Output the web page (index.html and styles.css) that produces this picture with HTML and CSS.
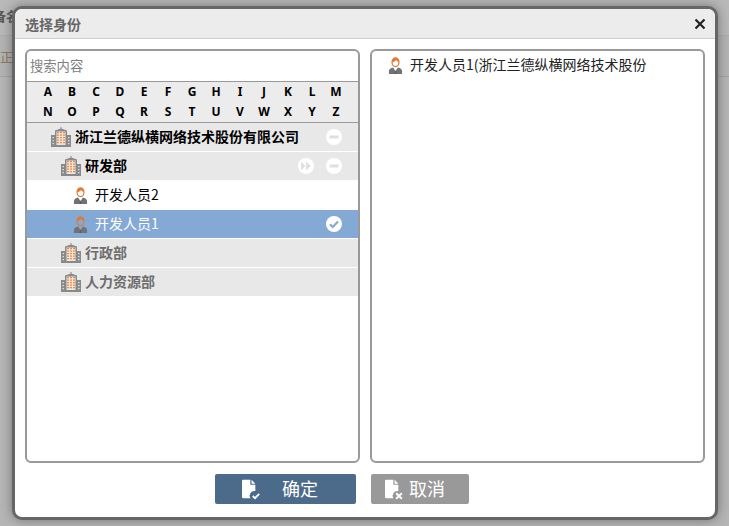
FILE: index.html
```html
<!DOCTYPE html>
<html lang="zh">
<head>
<meta charset="utf-8">
<title>选择身份</title>
<link rel="stylesheet" href="styles.css">
</head>
<body>
<svg class="defs" width="0" height="0" aria-hidden="true">
  <symbol id="building" viewBox="0 0 20 20">
    <path fill="#868a8a" d="M0 18.500h20V20H0zM0 8h4v11H0zM16 8h4v11h-4zM9.500 0h1v2h-1zM4 3.500L10 1.500l6 2V19H4z"/>
    <path fill="#ece6df" d="M5.500 4.500h9V18h-9z"/>
    <path fill="#ee8a45" d="M6 5h2v1.300H6zM9 5h2v1.300H9zM12 5h2v1.300h-2zM6 7.500h2v1.300H6zM9 7.500h2v1.300H9zM12 7.500h2v1.300h-2zM6 10h2v1.300H6zM9 10h2v1.300H9zM12 10h2v1.300h-2zM6 12.500h2v1.300H6zM9 12.500h2v1.300H9zM12 12.500h2v1.300h-2zM6 15h2v1.300H6zM9 15h2v1.300H9zM12 15h2v1.300h-2z"/>
    <path fill="#dcdcdc" d="M1.500 10h1.500v1.200H1.500zM1.500 13h1.500v1.200H1.500zM1.500 16h1.500v1.200H1.500zM17 10h1.500v1.200H17zM17 13h1.500v1.200H17zM17 16h1.500v1.200H17z"/>
  </symbol>
  <symbol id="person" viewBox="0 0 16 18">
    <path fill="#6f7376" d="M1 18v-3C1 13 3 12 5.500 11.200L8 15l2.500-3.800C13 12 15 13 15 15v3z"/>
    <path fill="#5d6165" d="M7.400 14.500h1.200l.5 3.500H6.900z"/>
    <ellipse cx="8" cy="5.500" rx="3.700" ry="4.600" fill="none" stroke="#e07a32" stroke-width="1.300"/>
    <path fill="#e07a32" d="M4.300 5.500C4.300 2.500 6 .9 8 .9s3.700 1.600 3.700 4.600C10.300 5 9.300 4.200 8.800 3.200 7.800 4.500 6 5.300 4.300 5.500z"/>
  </symbol>
  <symbol id="file" viewBox="0 0 18 22">
    <path fill="#fff" d="M1.500 0H10v6h6v7.500a5.500 5.500 0 0 0-5.800 8.500H1.500A1.500 1.500 0 0 1 0 20.500v-19A1.500 1.500 0 0 1 1.500 0z"/>
    <path fill="#fff" d="M11.500 0L16 4.800h-4.500z"/>
  </symbol>
</svg>

<div class="backdrop">
  <span class="bg-a">备名</span>
  <span class="bg-b">正</span>
</div>

<section class="modal">
  <header class="modal-head">
    <h1 class="modal-title">选择身份</h1>
    <svg class="close" width="12" height="12" viewBox="0 0 12 12"><path d="M1.500 1.500l9 9M10.500 1.500l-9 9" stroke="#222" stroke-width="2.200" fill="none"/></svg>
  </header>
  <div class="modal-body">
    <div class="panels">
      <div class="panel">
        <div class="search">搜索内容</div>
        <div class="letters">
          <span>A</span><span>B</span><span>C</span><span>D</span><span>E</span><span>F</span><span>G</span><span>H</span><span>I</span><span>J</span><span>K</span><span>L</span><span>M</span>
          <span>N</span><span>O</span><span>P</span><span>Q</span><span>R</span><span>S</span><span>T</span><span>U</span><span>V</span><span>W</span><span>X</span><span>Y</span><span>Z</span>
        </div>
        <div class="tree">
          <div class="row org lvl0 strong">
            <svg class="ico-b"><use href="#building"/></svg>
            <span class="label">浙江兰德纵横网络技术股份有限公司</span>
            <svg class="act" viewBox="0 0 16 16"><circle cx="8" cy="8" r="8" fill="#fff"/><rect x="3.500" y="6.500" width="9" height="3" rx=".5" fill="#e0e0e0"/></svg>
          </div>
          <div class="row org lvl1 strong">
            <svg class="ico-b"><use href="#building"/></svg>
            <span class="label">研发部</span>
            <svg class="act act-2" viewBox="0 0 16 16"><circle cx="8" cy="8" r="8" fill="#fff"/><path fill="#e0e0e0" d="M3 3.500L7.500 8 3 12.500zM8 3.500L13 8l-5 4.500z"/></svg>
            <svg class="act" viewBox="0 0 16 16"><circle cx="8" cy="8" r="8" fill="#fff"/><rect x="3.500" y="6.500" width="9" height="3" rx=".5" fill="#e0e0e0"/></svg>
          </div>
          <div class="row user lvl2">
            <svg class="ico-p"><use href="#person"/></svg>
            <span class="label">开发人员2</span>
          </div>
          <div class="row user lvl2 selected">
            <svg class="ico-p"><use href="#person"/></svg>
            <span class="label">开发人员1</span>
            <svg class="act" viewBox="0 0 16 16"><circle cx="8" cy="8" r="8" fill="#fff"/><path d="M4 8.300l2.800 2.700L12 5.500" fill="none" stroke="#85a9d5" stroke-width="2.200"/></svg>
          </div>
          <div class="row org lvl1 muted">
            <svg class="ico-b"><use href="#building"/></svg>
            <span class="label">行政部</span>
          </div>
          <div class="row org lvl1 muted">
            <svg class="ico-b"><use href="#building"/></svg>
            <span class="label">人力资源部</span>
          </div>
        </div>
      </div>
      <div class="panel">
        <div class="picked">
          <svg class="ico-p"><use href="#person"/></svg>
          <span class="label">开发人员1(浙江兰德纵横网络技术股份</span>
        </div>
      </div>
    </div>
    <div class="actions">
      <button class="btn btn-ok" type="button">
        <span class="file-wrap"><svg class="file"><use href="#file"/></svg><svg class="badge" viewBox="0 0 8 8"><path d="M.8 4l2.200 2.200L7.200 1.800" fill="none" stroke="#fff" stroke-width="1.800"/></svg></span>
        <span class="btn-text">确定</span>
      </button>
      <button class="btn btn-cancel" type="button">
        <span class="file-wrap"><svg class="file"><use href="#file"/></svg><svg class="badge" viewBox="0 0 8 8"><path d="M1.200 1.200l5.600 5.600M6.800 1.200L1.200 6.800" fill="none" stroke="#fff" stroke-width="2"/></svg></span>
        <span class="btn-text">取消</span>
      </button>
    </div>
  </div>
</section>
</body>
</html>
```

FILE: styles.css
```css
* { box-sizing: border-box; }
html, body { margin: 0; height: 100%; }
body {
  width: 729px;
  height: 526px;
  overflow: hidden;
  position: relative;
  background: #b5b5b5;
  font-family: "Noto Sans CJK SC", "Liberation Sans", sans-serif;
}
.defs { position: absolute; }

.backdrop {
  position: absolute;
  inset: 0;
  color: #555;
  font-size: 13px;
  background: linear-gradient(#b9b9b9 0 35px, #adadad 35px 36px, #b4b4b4 36px 76px, #a4a4a4 76px 77px, #b6b6b6 77px);
}
.bg-a { position: absolute; left: -7px; top: 6px; font-weight: 700; }
.bg-b { position: absolute; left: 0; top: 47px; color: #8d7a60; }

.modal {
  position: absolute;
  left: 12px;
  top: 6px;
  width: 706px;
  height: 514px;
  background: #fff;
  border: 3px solid #666;
  border-radius: 10px;
  box-shadow: 0 0 12px rgba(60, 60, 60, .55);
  overflow: hidden;
}
.modal-head {
  height: 30px;
  background: #ececec;
  border-bottom: 1px solid #cfcfcf;
  display: flex;
  align-items: center;
  justify-content: space-between;
  padding: 0 9px 0 10px;
}
.modal-title {
  margin: 0;
  font-size: 14px;
  line-height: 18px;
  font-weight: 700;
  color: #666;
}
.modal-body { padding: 10px 10px 0; }
.panels { display: flex; gap: 10px; }
.panel {
  width: 335px;
  height: 414px;
  border: 2px solid #999;
  border-radius: 6px;
  overflow: hidden;
}
.search {
  height: 31px;
  padding: 5px 0 0 3px;
  border-bottom: 1px solid #999;
  color: #808080;
  font-size: 13.300px;
  line-height: 20px;
}
.letters {
  display: grid;
  grid-template-columns: repeat(13, 24px);
  grid-auto-rows: 20px;
  padding: 0 0 0 9px;
  height: 41px;
  background: #ececec;
  border-bottom: 1px solid #999;
  font-family: "Noto Sans", "Liberation Sans", sans-serif;
  font-size: 12px;
  font-weight: 700;
  color: #000;
  text-align: center;
  line-height: 20px;
}
.row {
  display: flex;
  align-items: center;
  font-size: 14px;
  color: #000;
}
.row .label { line-height: 20px; padding-bottom: 2px; }
.org { background: #e8e8e8; height: 28px; margin-bottom: 1px; }
.user { background: #fff; height: 30px; }
.user.selected { background: #85a9d5; color: #fff; height: 28px; margin-bottom: 1px; }
.strong { font-weight: 700; }
.muted { color: #6e6e6e; font-weight: 700; }
.lvl0 { padding-left: 24px; }
.lvl1 { padding-left: 34px; }
.lvl2 { padding-left: 46px; }
.row:nth-child(2) { margin-bottom: 0; }
.ico-b { width: 20px; height: 20px; margin-right: 4px; flex: none; }
.ico-p { width: 15px; height: 17px; flex: none; margin-right: 7px; }
.act { width: 16px; height: 16px; margin-left: auto; margin-right: 16px; flex: none; }
.act-2 { margin-right: 12px; }
.act-2 + .act { margin-left: 0; }

.picked {
  display: flex;
  align-items: center;
  height: 28px;
  padding-left: 16px;
  font-size: 14px;
  color: #222;
}
.picked .label { line-height: 20px; padding-bottom: 2px; white-space: nowrap; }

.actions {
  display: flex;
  gap: 15px;
  margin: 11px 0 0 190px;
}
.btn {
  border: 0;
  height: 30px;
  border-radius: 2px;
  display: flex;
  align-items: center;
  color: #fff;
  font-family: inherit;
  font-size: 18px;
  padding: 0;
}
.btn-ok { width: 141px; background: #4c6b8a; padding-left: 27px; }
.btn-cancel { width: 98px; background: #999; padding-left: 14px; }
.btn-ok .btn-text { margin-left: 23px; }
.btn-cancel .btn-text { margin-left: 7px; }
.btn-text { line-height: 24px; padding-bottom: 2px; }
.file-wrap { position: relative; width: 17px; height: 21px; flex: none; }
.file { position: absolute; left: 0; top: 0; width: 15px; height: 20px; }
.badge { position: absolute; left: 10px; top: 13px; width: 8px; height: 8px; }
```
